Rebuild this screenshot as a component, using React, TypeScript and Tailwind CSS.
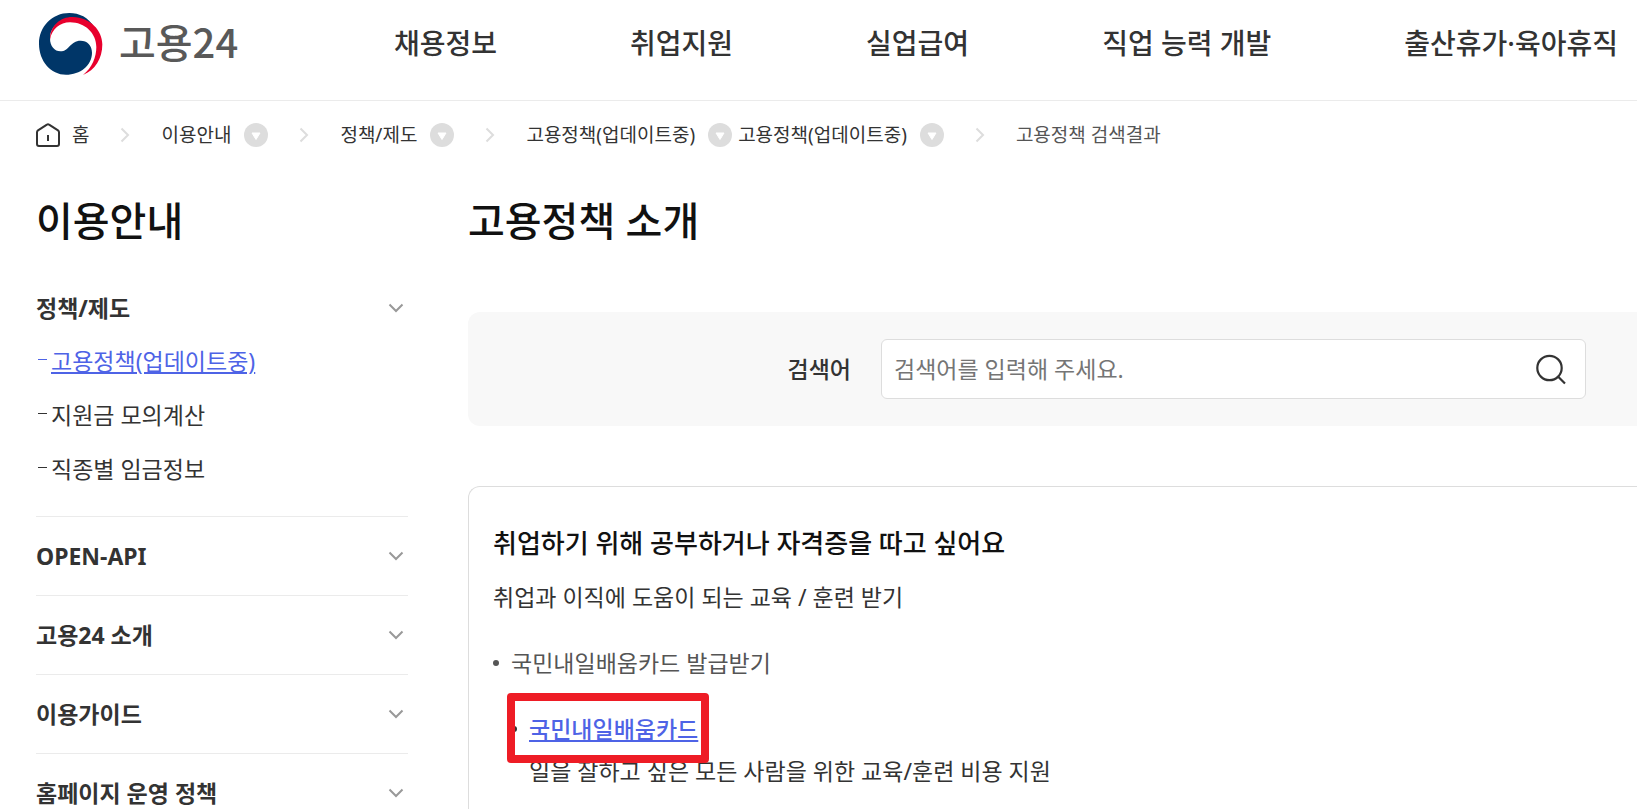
import React, { useState } from "react";

function TaegeukLogo() {
  return (
    <svg viewBox="27 22 192 190" className="h-16 w-16 shrink-0" aria-hidden="true">
      <path
        fill="#003668"
        d="M192 66C175 37 148 24 118 24C66 24 27 65 27 116C27 168 62 209 108 209C151 209 186 181 186 143C186 121 171 107 152 107C120 107 118 139 91 139C74 139 60 125 60 100C60 65 90 42 125 42C152 42 176 51 192 66Z"
      />
      <path
        fill="#e8002d"
        d="M60 104C60 60 94 35 128 36C181 38 217 76 217 118C217 161 195 196 159 210C187 188 199 156 199 126C199 85 165 52 120 52C90 52 65 72 60 104Z"
      />
    </svg>
  );
}

function HomeIcon() {
  return (
    <svg viewBox="0 0 24 24" className="size-6 shrink-0" fill="none" stroke="#333" strokeWidth="2" aria-hidden="true">
      <path d="M1 9.2C1 8.4 1.3 7.9 2 7.4L10.9 1.6C11.6 1.1 12.4 1.1 13.1 1.6L22 7.4C22.7 7.9 23 8.4 23 9.2V21C23 22.3 22.3 23 21 23H3C1.7 23 1 22.3 1 21Z" />
      <path d="M12 12V18" />
    </svg>
  );
}

function Separator() {
  return (
    <svg viewBox="0 0 10 16" className="h-4 w-[10px] shrink-0" fill="none" stroke="#ddd" strokeWidth="2" aria-hidden="true">
      <path d="M1.5 1.5L8 8L1.5 14.5" />
    </svg>
  );
}

function ChevronDown() {
  return (
    <svg viewBox="0 0 16 10" className="h-[10px] w-4 shrink-0" fill="none" stroke="#999" strokeWidth="2" aria-hidden="true">
      <path d="M1.5 1.5L8 8L14.5 1.5" />
    </svg>
  );
}

function Crumb({ label }: { label: string }) {
  return (
    <span className="flex items-center gap-[13px]">
      <a href="#crumb">{label}</a>
      <button type="button" aria-label={`${label} 하위 메뉴`} className="shrink-0">
        <svg viewBox="0 0 24 24" className="size-6" aria-hidden="true">
          <circle cx="12" cy="12" r="12" fill="#ddd" />
          <path d="M8 10H16L12 16.5Z" fill="#fff" stroke="#fff" strokeLinejoin="round" />
        </svg>
      </button>
    </span>
  );
}

const NAV = ["채용정보", "취업지원", "실업급여", "직업 능력 개발", "출산휴가·육아휴직"];
const POLICY_LINKS = ["고용정책(업데이트중)", "지원금 모의계산", "직종별 임금정보"];
const SECTIONS = ["OPEN-API", "고용24 소개", "이용가이드", "홈페이지 운영 정책"];

export default function App() {
  const [query, setQuery] = useState("");

  return (
    <div className="h-screen overflow-hidden bg-white font-['Noto_Sans','Noto_Sans_CJK_KR',sans-serif] whitespace-nowrap text-[#333]">
      <header className="flex h-[101px] items-start border-b border-[#ebebeb] pl-[39px]">
        <a href="#home" className="mt-3 flex w-[355px] shrink-0 items-start gap-4">
          <TaegeukLogo />
          <span className="font-['Noto_Sans_CJK_KR',sans-serif] text-[40px] leading-[58px] font-medium text-[#595959]">고용24</span>
        </a>
        <nav className="mt-[23px] flex gap-[133px] text-[28px] leading-10 font-medium">
          {NAV.map((item) => (
            <a key={item} href="#nav">{item}</a>
          ))}
        </nav>
      </header>

      <nav aria-label="breadcrumb" className="flex h-[68px] items-center pl-9 text-[19px]">
        <a href="#home" className="flex items-center gap-3"><HomeIcon />홈</a>
        <span className="flex w-[72px] justify-center"><Separator /></span>
        <Crumb label="이용안내" />
        <span className="flex w-[72px] justify-center"><Separator /></span>
        <Crumb label="정책/제도" />
        <span className="flex w-[72px] justify-center"><Separator /></span>
        <span className="flex gap-[6px]">
          <Crumb label="고용정책(업데이트중)" />
          <Crumb label="고용정책(업데이트중)" />
        </span>
        <span className="flex w-[72px] justify-center"><Separator /></span>
        <span className="text-[#555]">고용정책 검색결과</span>
      </nav>

      <div className="flex pt-6 pl-9">
        <aside className="mr-[60px] w-[372px] shrink-0">
          <h2 className="text-[40px] leading-[56px] font-medium text-[#111]">이용안내</h2>
          <section className="mt-[37px] border-b border-[#ebebeb] pb-5">
            <button type="button" className="flex h-11 w-full items-center justify-between pr-1 text-[23px] font-bold">
              정책/제도
              <ChevronDown />
            </button>
            <ul className="mt-1 text-[23px]">
              {POLICY_LINKS.map((item, index) => (
                <li key={item} className={index === 0 ? "flex h-[54px] items-center text-[#4e63e6]" : "flex h-[54px] items-center"}>
                  <span className="mr-1 mb-1 ml-[2px] h-px w-[9px] bg-current" />
                  <a href="#policy" className={index === 0 ? "underline decoration-2 underline-offset-2" : ""}>{item}</a>
                </li>
              ))}
            </ul>
          </section>
          {SECTIONS.map((item) => (
            <section key={item} className="border-b border-[#ebebeb]">
              <button type="button" className="flex h-[78px] w-full items-center justify-between pr-1 text-[23px] font-bold">
                {item}
                <ChevronDown />
              </button>
            </section>
          ))}
        </aside>

        <main className="min-w-0 grow">
          <h1 className="text-[40px] leading-[56px] font-medium text-[#111]">고용정책 소개</h1>
          <form
            className="mt-[63px] flex h-[114px] items-center justify-end gap-[30px] rounded-l-xl bg-[#f8f8f8] pr-[51px]"
            onSubmit={(event) => event.preventDefault()}
          >
            <label htmlFor="keyword" className="text-[23px] font-medium">검색어</label>
            <div className="flex h-[60px] w-[705px] items-center rounded-md border border-[#ddd] bg-white pr-[18px] pl-3">
              <input
                id="keyword"
                type="text"
                value={query}
                onChange={(event) => setQuery(event.target.value)}
                placeholder="검색어를 입력해 주세요."
                className="h-full min-w-0 grow text-[23px] outline-none placeholder:text-[#757575]"
              />
              <button type="submit" aria-label="검색">
                <svg viewBox="0 0 32 32" className="size-8" fill="none" stroke="#333" strokeWidth="2.2" aria-hidden="true">
                  <circle cx="14.5" cy="15" r="12.2" />
                  <path d="M23 23.5L30 30.5" />
                </svg>
              </button>
            </div>
          </form>

          <article className="mt-[60px] rounded-tl-xl border-t border-l border-[#ddd] pt-9 pb-12 pl-6 text-[23px]">
            <h3 className="text-[26px] leading-10 font-medium text-[#111]">취업하기 위해 공부하거나 자격증을 따고 싶어요</h3>
            <p className="mt-4 leading-9">취업과 이직에 도움이 되는 교육 / 훈련 받기</p>
            <ul className="mt-[30px] text-[#555]">
              <li>
                <div className="flex items-center gap-3 leading-9">
                  <span className="size-[6px] rounded-full bg-current" />
                  국민내일배움카드 발급받기
                </div>
                <ul className="mt-[30px] ml-[18px] text-[#333]">
                  <li>
                    <div className="relative flex w-max items-center gap-3 leading-9">
                      <span className="size-[6px] rounded-full bg-current" />
                      <a href="#card" className="font-medium text-[#4e63e6] underline decoration-2 underline-offset-2">국민내일배움카드</a>
                      <span className="pointer-events-none absolute -top-[18px] -right-[11px] -bottom-4 -left-1 rounded-[4px] border-8 border-[#ee1c25]" />
                    </div>
                    <p className="mt-[6px] ml-[18px] leading-9">일을 잘하고 싶은 모든 사람을 위한 교육/훈련 비용 지원</p>
                  </li>
                </ul>
              </li>
            </ul>
          </article>
        </main>
      </div>
    </div>
  );
}
